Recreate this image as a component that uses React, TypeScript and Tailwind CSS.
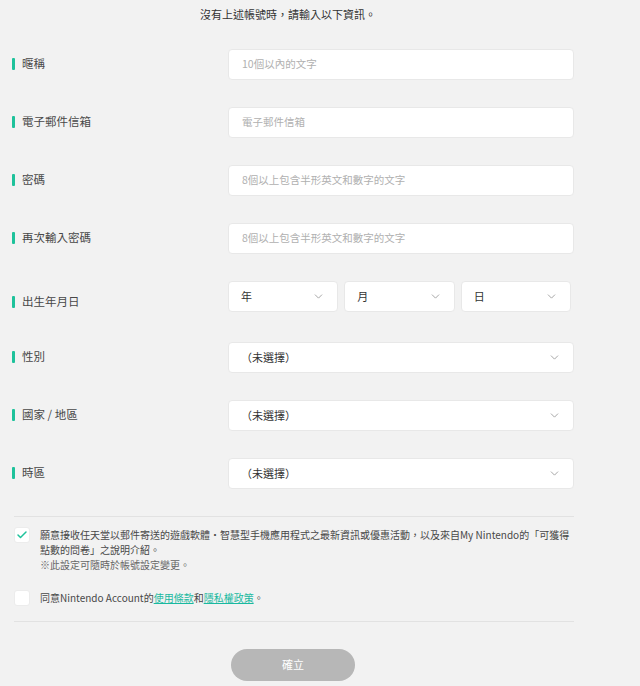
import React from 'react';
import { ChevronDown, Check } from 'lucide-react';

const font = { fontFamily: '"Noto Sans CJK TC", "Noto Sans", sans-serif' };

function Label({ text, className = '' }: { text: string; className?: string }) {
  return (
    <div className={`flex items-center gap-[7px] w-[216px] shrink-0 ${className}`}>
      <span className="w-[3px] h-[12px] bg-[#1ec29b] rounded-[1px]" />
      <span className="text-[11.5px] text-[#484848]">{text}</span>
    </div>
  );
}

function TextField({ placeholder }: { placeholder: string }) {
  return (
    <div className="h-[31px] w-[346px] bg-white border border-[#e8e8e8] rounded-[4px] flex items-center px-[13px] text-[10.5px] text-[#b0b0b0]">
      {placeholder}
    </div>
  );
}

function Select({ value, className = '' }: { value: string; className?: string }) {
  return (
    <div className={`h-[31px] bg-white border border-[#e8e8e8] rounded-[4px] flex items-center justify-between pl-[12px] pr-[12px] text-[11px] text-[#333] ${className}`}>
      <span>{value}</span>
      <ChevronDown size={13} strokeWidth={1.6} className="text-[#999]" />
    </div>
  );
}

function Row({ label, children, labelClass, className = '' }: { label: string; children: React.ReactNode; labelClass?: string; className?: string }) {
  return (
    <div className={`flex items-center ${className}`}>
      <Label text={label} className={labelClass} />
      {children}
    </div>
  );
}

export default function App() {
  return (
    <div className="min-h-[686px] bg-[#f2f2f2] pl-[12px]" style={font}>
      <div className="w-[562px]">
        <p className="pt-[6px] text-center text-[11px] text-[#333] pr-[10px]">沒有上述帳號時，請輸入以下資訊。</p>

        <div className="mt-[26px] flex flex-col gap-[27px]">
          <Row label="暱稱"><TextField placeholder="10個以內的文字" /></Row>
          <Row label="電子郵件信箱"><TextField placeholder="電子郵件信箱" /></Row>
          <Row label="密碼"><TextField placeholder="8個以上包含半形英文和數字的文字" /></Row>
          <Row label="再次輸入密碼"><TextField placeholder="8個以上包含半形英文和數字的文字" /></Row>
          <Row label="出生年月日" labelClass="mt-[11px]" className="mb-[3px]">
            <div className="grid grid-cols-3 gap-[6px] w-[343px]">
              <Select value="年" />
              <Select value="月" />
              <Select value="日" />
            </div>
          </Row>
          <Row label="性別"><Select value="（未選擇）" className="w-[346px] pl-[10px]" /></Row>
          <Row label="國家 / 地區"><Select value="（未選擇）" className="w-[346px] pl-[10px]" /></Row>
          <Row label="時區"><Select value="（未選擇）" className="w-[346px] pl-[10px]" /></Row>
        </div>

        <div className="mt-[27px] ml-[2px] border-t border-[#e2e2e2] pt-[10px] pb-[15px]">
          <div className="flex items-start gap-[10px]">
            <div className="w-[16px] h-[16px] bg-white rounded-[3px] border border-[#ececec] flex items-center justify-center shrink-0">
              <Check size={12} strokeWidth={3} className="text-[#1ec29b]" />
            </div>
            <p className="text-[10px] leading-[15px] text-[#484848] w-[530px]">
              願意接收任天堂以郵件寄送的遊戲軟體・智慧型手機應用程式之最新資訊或優惠活動，以及來自My Nintendo的「可獲得點數的問卷」之說明介紹。
              <br />
              <span className="text-[#666]">※此設定可隨時於帳號設定變更。</span>
            </p>
          </div>
          <div className="mt-[18px] flex items-center gap-[10px]">
            <div className="w-[16px] h-[16px] bg-white rounded-[3px] border border-[#ececec] shrink-0" />
            <p className="text-[10px] leading-[15px] text-[#484848]">
              同意Nintendo Account的
              <span className="text-[#19b9a0] underline">使用條款</span>和
              <span className="text-[#19b9a0] underline">隱私權政策</span>。
            </p>
          </div>
        </div>
        <div className="ml-[2px] border-t border-[#e2e2e2]" />

        <div className="mt-[27px] flex justify-center">
          <button className="w-[124px] h-[32px] rounded-full bg-[#b7b7b7] text-white text-[11px]">確立</button>
        </div>
      </div>
    </div>
  );
}
